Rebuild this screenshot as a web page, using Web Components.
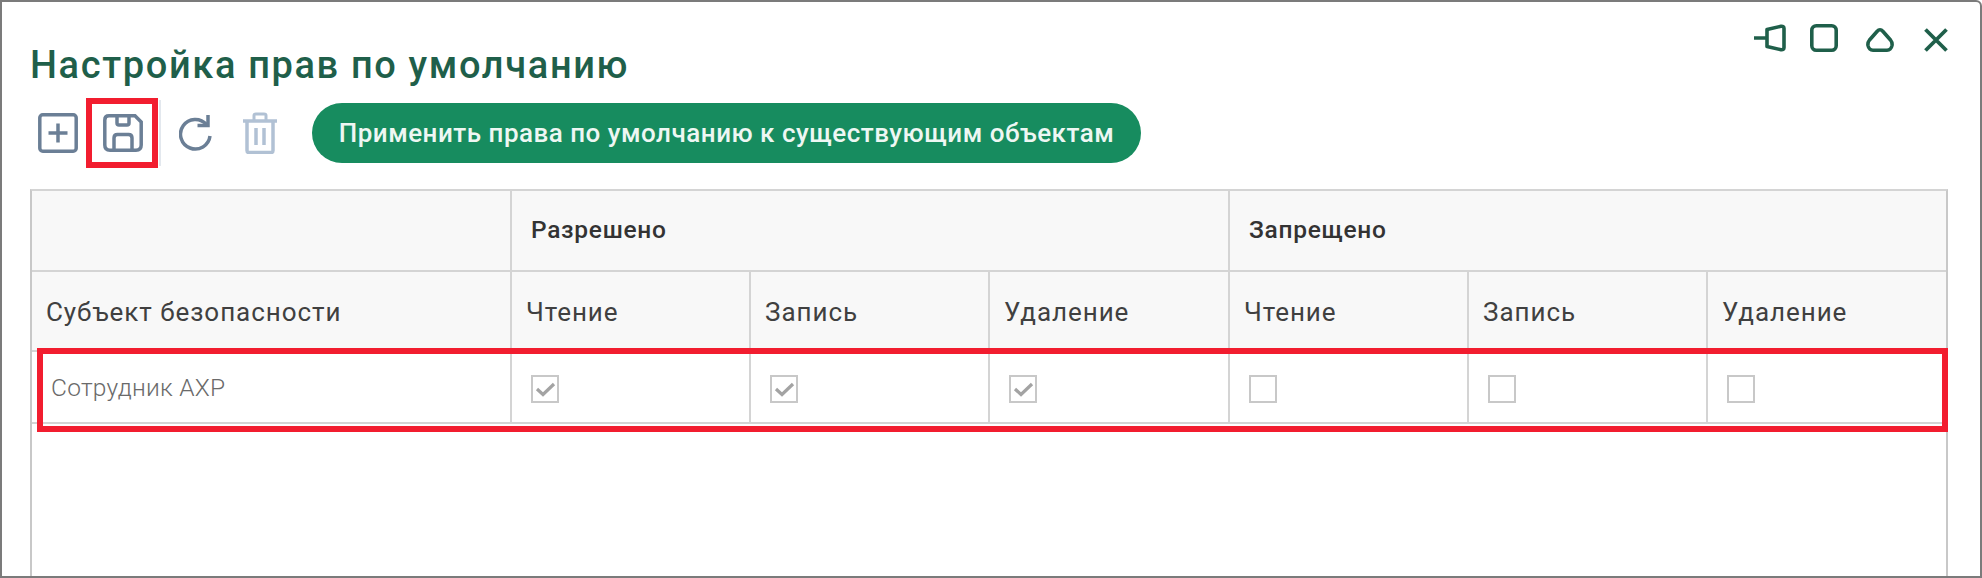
<!DOCTYPE html>
<html lang="ru"><head><meta charset="utf-8"><title>Настройка прав</title>
<style>html,body{margin:0;padding:0;background:#fff}body{font-family:Roboto,"Liberation Sans",sans-serif}</style>
</head><body>
<app-window heading="Настройка прав по умолчанию">
  <tool-bar>
    <icon-btn kind="add"></icon-btn>
    <icon-btn kind="save"></icon-btn>
    <tool-sep></tool-sep>
    <icon-btn kind="refresh"></icon-btn>
    <icon-btn kind="trash"></icon-btn>
    <pill-btn>Применить права по умолчанию к существующим объектам</pill-btn>
  </tool-bar>
  <perm-grid>
    <perm-cell head></perm-cell>
    <perm-cell head group span="3">Разрешено</perm-cell>
    <perm-cell head group span="3" last>Запрещено</perm-cell>
    <perm-cell head>Субъект безопасности</perm-cell>
    <perm-cell head>Чтение</perm-cell>
    <perm-cell head>Запись</perm-cell>
    <perm-cell head>Удаление</perm-cell>
    <perm-cell head>Чтение</perm-cell>
    <perm-cell head>Запись</perm-cell>
    <perm-cell head last>Удаление</perm-cell>
    <perm-cell name>Сотрудник АХР</perm-cell>
    <perm-cell check><perm-check checked></perm-check></perm-cell>
    <perm-cell check><perm-check checked></perm-check></perm-cell>
    <perm-cell check><perm-check checked></perm-check></perm-cell>
    <perm-cell check><perm-check></perm-check></perm-cell>
    <perm-cell check><perm-check></perm-check></perm-cell>
    <perm-cell check last><perm-check></perm-check></perm-cell>
  </perm-grid>
  <mark-box style="left:84px;top:96px;width:72px;height:70px"></mark-box>
  <mark-box style="left:35px;top:346px;width:1911px;height:84px"></mark-box>
</app-window>
<script>
function def(name, css, html, init){
  customElements.define(name, class extends HTMLElement{
    constructor(){super();const r=this.attachShadow({mode:'open'});r.innerHTML='<style>'+css+'</style>'+(typeof html==='function'?html(this):html);}
    connectedCallback(){ if(init) init(this); }
  });
}
const W={
 pin:'<svg width="32" height="28" viewBox="0 0 32 28" fill="none" stroke="#1f5f4a" stroke-width="3.6" stroke-linejoin="round"><path d="M0 14H13"/><path d="M13 5.5 27 2.300Q30 2 30 4.500V23.500Q30 26 27 25.700L13 22.500Z"/></svg>',
 max:'<svg width="28" height="28" viewBox="0 0 28 28" fill="none" stroke="#1f5f4a" stroke-width="3.6"><rect x="1.800" y="1.800" width="24.400" height="24.400" rx="4.500"/></svg>',
 tri:'<svg width="28" height="24" viewBox="0 0 28 24" fill="none" stroke="#1f5f4a" stroke-width="3.6" stroke-linejoin="round"><path d="M14 1.800Q15.500 1.800 17 3.500L24.500 12Q26.500 14.500 26 17.500Q25 22.200 21 22.200H7Q3 22.200 2 17.500Q1.500 14.500 3.500 12L11 3.500Q12.500 1.800 14 1.800Z"/></svg>',
 close:'<svg width="24" height="24" viewBox="0 0 24 24" fill="none" stroke="#1f5f4a" stroke-width="3.8"><path d="M1.500 1.500 22.500 22.500M22.500 1.500 1.500 22.500"/></svg>'
};
def('app-window',
 `:host{display:flex;flex-direction:column;box-sizing:border-box;position:relative;width:1982px;height:578px;overflow:hidden;background:#fff;border:2px solid #7b7b7b;border-top-right-radius:6px;padding:0 32px 0 28px}
  header{display:flex;justify-content:space-between;height:96px;flex:none}
  h1{margin:0;padding-top:41px;font:500 38px/44px "Roboto",sans-serif;letter-spacing:1.640px;color:#1f5f4a;white-space:nowrap}
  .win{display:flex;padding-top:22px;align-items:flex-start;margin-right:0}
  .win svg{display:block}
  .win span{display:block}
  .win .a{margin-right:24px}.win .b{margin-right:28px}.win .c{margin-right:30px;margin-top:4px}.win .d{margin-top:4px}`,
 el=>`<header><h1>${el.getAttribute('heading')}</h1><div class="win"><span class="a">${W.pin}</span><span class="b">${W.max}</span><span class="c">${W.tri}</span><span class="d">${W.close}</span></div></header><slot></slot>`);
def('tool-bar',`:host{display:flex;align-items:center;height:70px;flex:none;margin-bottom:21px}`,'<slot></slot>');
def('tool-sep',`:host{display:block;flex:none;width:2px;height:66px;background:#e3e8ee;margin:0 18px 0 16px}`,'');
const IC={
 add:{w:40,h:40,m:'0 25px 0 8px',c:'#6b7f96',s:'<rect x="1.800" y="1.800" width="36.400" height="36.400" rx="3" stroke-width="3.500"/><path d="M20 10.500V29.500M10.500 20H29.500" stroke-width="3.500"/>'},
 save:{w:40,h:38,m:'0',c:'#6b7f96',s:'<path d="M6 1.800H32L38.200 8V31Q38.200 36.200 33 36.200H7Q1.800 36.200 1.800 31V6Q1.800 1.800 6 1.800Z" stroke-width="3.500"/><path d="M14 2V9Q14 11 16 11H24Q26 11 26 9V2" stroke-width="3.500"/><path d="M11 36V24Q11 20.500 14.500 20.500H25.500Q29 20.500 29 24V36" stroke-width="3.500"/>'},
 refresh:{w:34,h:38,m:'0 29px 0 0',c:'#6b7f96',s:'<path d="M27.500 10.500A14.800 14.800 0 1 0 31 22" stroke-width="3.500"/><path d="M29 1V11.500H18.500" stroke-width="3.500" stroke-linejoin="miter"/>'},
 trash:{w:36,h:42,m:'0 34px 0 0',c:'#b1c1d4',s:'<path d="M1 9H35" stroke-width="3.500"/><path d="M12 8V3.500Q12 2 14 2H22Q24 2 24 3.500V8" stroke-width="3"/><path d="M5 9V38.500Q5 40.500 7 40.500H29Q31 40.500 31 38.500V9" stroke-width="3.500"/><path d="M14 16V33M22 16V33" stroke-width="3.500"/>'}
};
def('icon-btn',`:host{display:block;flex:none}svg{display:block}`,el=>{const i=IC[el.getAttribute('kind')];el.style.margin=i.m;return `<svg width="${i.w}" height="${i.h}" viewBox="0 0 ${i.w} ${i.h}" fill="none" stroke="${i.c}">${i.s}</svg>`});
def('pill-btn',`:host{display:flex;align-items:center;justify-content:center;box-sizing:border-box;flex:none;width:829px;height:60px;border-radius:30px;background:#178c5f;color:#eef7f3;font:500 26px/1 "Roboto",sans-serif;letter-spacing:.5px;white-space:nowrap}`,'<slot></slot>');
def('perm-grid',`:host{display:grid;flex:1;box-sizing:border-box;width:1918px;grid-template-columns:480px 239px 239px 240px 239px 239px 238px;grid-template-rows:81px 80px 72px 1fr;border:2px solid #c8c8c8;border-top-color:#d4d4d4;border-bottom:0}`,'<slot></slot>');
def('perm-cell',
 `:host{display:flex;align-items:center;box-sizing:border-box;min-width:0;border-right:2px solid #d4d4d4;border-bottom:2px solid #d4d4d4;color:#3c3c3c;font:400 26px/1 "Roboto",sans-serif;letter-spacing:.95px;white-space:nowrap;padding-left:14px}
  :host([head]){background:#f8f8f8;color:#404040;padding-top:2px}
  :host([group]){font-weight:500;font-size:24.500px;padding-left:19px;padding-top:0;letter-spacing:.7px;color:#333}
  :host([name]){color:#6a6a6a;font-size:24.500px;padding-left:19px;letter-spacing:.25px;font-weight:300;padding-top:2px}
  :host([check]){padding-left:19px}
  :host([last]){border-right:0}`,'<slot></slot>',
 el=>{const s=el.getAttribute('span');if(s)el.style.gridColumn='span '+s;});
def('perm-check',`:host{display:block;box-sizing:border-box;width:28px;height:28px;border:2px solid #c8c8c8;margin-top:4px}svg{display:block}`,
 el=>el.hasAttribute('checked')?'<svg width="24" height="24" viewBox="0 0 24 24" fill="none" stroke="#a3a3a3" stroke-width="3.200"><path d="M4 12 10 17.500 21 7"/></svg>':'');
def('mark-box',`:host{display:block;position:absolute;box-sizing:border-box;border:6px solid #f21d2f;pointer-events:none}`,'');
</script>
</body></html>
